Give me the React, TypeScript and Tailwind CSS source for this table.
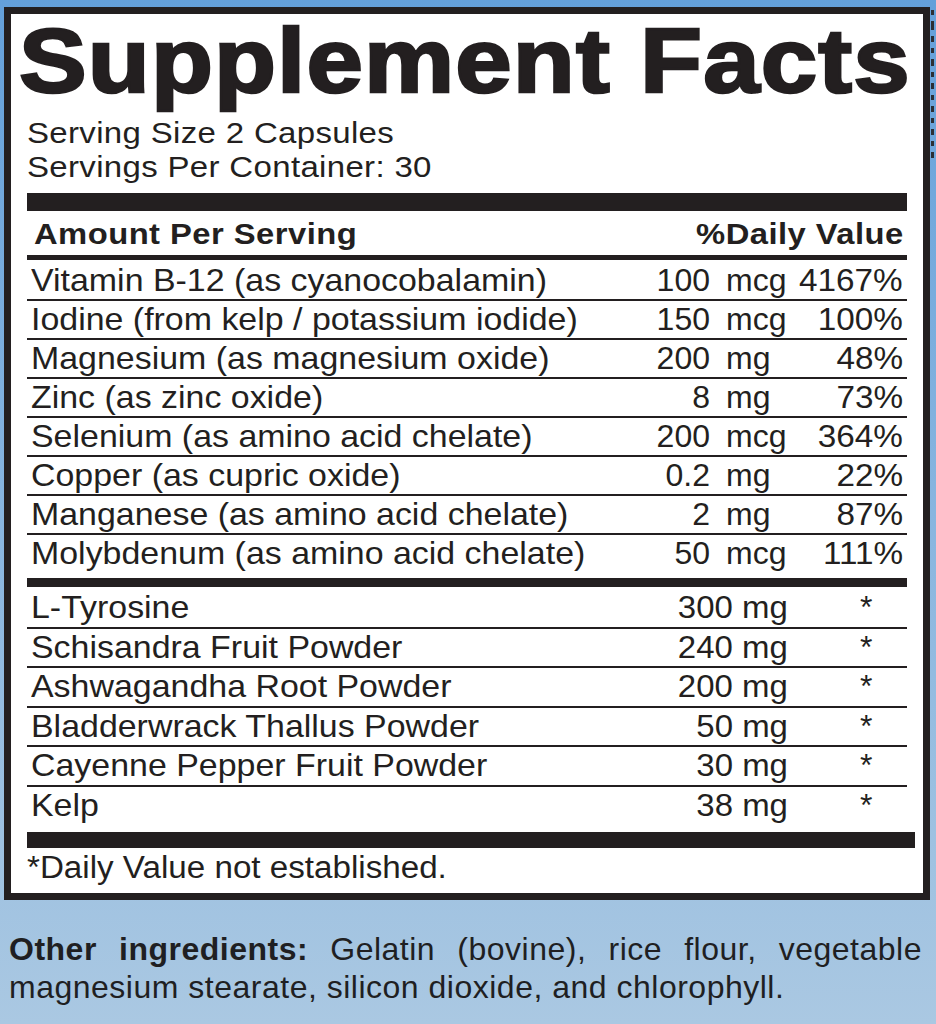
import React from "react";

const vitamins = [
  { name: "Vitamin B-12 (as cyanocobalamin)", amount: "100", unit: "mcg", dv: "4167%" },
  { name: "Iodine (from kelp / potassium iodide)", amount: "150", unit: "mcg", dv: "100%" },
  { name: "Magnesium (as magnesium oxide)", amount: "200", unit: "mg", dv: "48%" },
  { name: "Zinc (as zinc oxide)", amount: "8", unit: "mg", dv: "73%" },
  { name: "Selenium (as amino acid chelate)", amount: "200", unit: "mcg", dv: "364%" },
  { name: "Copper (as cupric oxide)", amount: "0.2", unit: "mg", dv: "22%" },
  { name: "Manganese (as amino acid chelate)", amount: "2", unit: "mg", dv: "87%" },
  { name: "Molybdenum (as amino acid chelate)", amount: "50", unit: "mcg", dv: "111%" },
];

const extras = [
  { name: "L-Tyrosine", amount: "300 mg" },
  { name: "Schisandra Fruit Powder", amount: "240 mg" },
  { name: "Ashwagandha Root Powder", amount: "200 mg" },
  { name: "Bladderwrack Thallus Powder", amount: "50 mg" },
  { name: "Cayenne Pepper Fruit Powder", amount: "30 mg" },
  { name: "Kelp", amount: "38 mg" },
];

// leftover marks of the neighbouring label at the right edge
const edgeMarks = [10, 20, 12, 10, 14, 8, 12, 10, 11, 9, 12, 10, 11];

export default function App() {
  return (
    <div className="w-[936px] h-[1024px] overflow-hidden bg-linear-to-b from-[#64a0da] via-[#88b5df] to-[#aac8e2] text-[#231f20] font-['Liberation_Sans',Arial,sans-serif]">
      <div className="flex">
        {/* label box */}
        <div className="ml-[4px] mt-[7px] w-[926px] h-[893px] border-[7px] border-[#231f20] bg-white px-[16px] flex flex-col">
          <h1 className="mt-px -ml-[8px] whitespace-nowrap text-[91px] leading-none font-bold tracking-[1px] origin-left scale-x-[1.115] [-webkit-text-stroke:2.5px_#231f20]">
            Supplement Facts
          </h1>
          <div className="mt-[10px] text-[30px] leading-[34px] tracking-[0.3px]">
            <p className="origin-left scale-x-[1.1]">Serving Size 2 Capsules</p>
            <p className="origin-left scale-x-[1.1]">Servings Per Container: 30</p>
          </div>

          <div className="mt-[9px] h-[18px] bg-[#231f20]" />
          <div className="h-[44px] pt-[2px] flex items-center justify-between text-[29px] leading-[44px] font-bold tracking-[0.4px]">
            <span className="ml-[7px] inline-block origin-left scale-x-[1.13]">Amount Per Serving</span>
            <span className="mr-[3px] inline-block origin-right scale-x-[1.13]">%Daily Value</span>
          </div>
          <div className="h-[5px] bg-[#231f20]" />

          <div className="h-[318px] pt-[2px] flex flex-col text-[32px] leading-[36px]">
            {vitamins.map((v, i) => {
              const last = i === vitamins.length - 1;
              return (
                <div
                  key={v.name}
                  className={
                    "flex whitespace-nowrap " +
                    (last ? "flex-1" : "h-[39px] border-b-2 border-[#231f20]")
                  }
                >
                  <span className="flex-1 pl-[4px]">
                    <span className="inline-block origin-left scale-x-[1.06]">{v.name}</span>
                  </span>
                  <span className="w-[100px] pr-[1px] text-right">{v.amount}</span>
                  <span className="w-[72px] ml-[15px]">{v.unit}</span>
                  <span className="w-[109px] pr-[4px] text-right">
                    <span className="inline-block origin-right scale-x-[1.04]">{v.dv}</span>
                  </span>
                </div>
              );
            })}
          </div>

          <div className="h-[9px] bg-[#231f20]" />

          <div className="h-[245px] pt-[2px] flex flex-col text-[32px] leading-[37px]">
            {extras.map((e, i) => {
              const last = i === extras.length - 1;
              return (
                <div
                  key={e.name}
                  className={
                    "flex whitespace-nowrap " +
                    (last ? "flex-1" : "h-[39.5px] border-b-2 border-[#231f20]")
                  }
                >
                  <span className="flex-1 pl-[4px]">
                    <span className="inline-block origin-left scale-x-[1.06]">{e.name}</span>
                  </span>
                  <span className="w-[160px] pr-[1px] text-right">
                    <span className="inline-block origin-right scale-x-[1.03]">{e.amount}</span>
                  </span>
                  <span className="w-[118px] pl-[71px]">*</span>
                </div>
              );
            })}
          </div>

          <div className="-mr-[8px] h-[16px] bg-[#231f20]" />
          <p className="mt-[2px] text-[31px] leading-[36px]">
            <span className="inline-block origin-left scale-x-[1.07]">*Daily Value not established.</span>
          </p>
        </div>

        <div className="ml-[1px] pt-[10px] flex flex-col gap-[6px]">
          {edgeMarks.map((h, i) => (
            <span key={i} className="block w-[3px] bg-[#2b2f36]" style={{ height: h / 3 + 2 }} />
          ))}
        </div>
      </div>

      {/* other ingredients */}
      <div className="mt-[30px] pl-[9px] pr-[14px] text-[32px] leading-[38px] tracking-[0.5px] text-[#1f1f22]">
        <p className="whitespace-nowrap text-justify [text-align-last:justify]">
          <strong className="font-bold">Other ingredients:</strong> Gelatin (bovine), rice flour, vegetable
        </p>
        <p>magnesium stearate, silicon dioxide, and chlorophyll.</p>
      </div>
    </div>
  );
}
